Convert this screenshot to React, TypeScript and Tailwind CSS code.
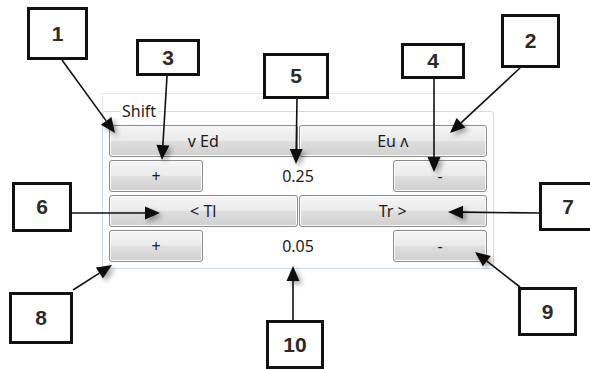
import React from "react";

type Box = { n: string; l: number; t: number; w: number; h: number };

const boxes: Box[] = [
  { n: "1", l: 27, t: 7, w: 61, h: 53 },
  { n: "3", l: 136, t: 39, w: 64, h: 37 },
  { n: "5", l: 263, t: 53, w: 66, h: 46 },
  { n: "4", l: 401, t: 43, w: 64, h: 36 },
  { n: "2", l: 501, t: 14, w: 59, h: 54 },
  { n: "6", l: 12, t: 182, w: 60, h: 50 },
  { n: "7", l: 539, t: 182, w: 58, h: 49 },
  { n: "8", l: 9, t: 292, w: 64, h: 52 },
  { n: "9", l: 518, t: 287, w: 59, h: 49 },
  { n: "10", l: 266, t: 320, w: 58, h: 49 },
];

const arrows: [number, number, number, number][] = [
  [62, 60, 115, 133],
  [167, 76, 162, 160],
  [297, 99, 296, 164],
  [434, 79, 434, 172],
  [520, 68, 450, 133],
  [72, 213, 160, 213],
  [539, 213, 448, 212],
  [73, 290, 112, 265],
  [520, 287, 475, 252],
  [293, 320, 293, 266],
];

function Arrow({ a }: { a: [number, number, number, number] }) {
  const [x1, y1, x2, y2] = a;
  const dx = x2 - x1;
  const dy = y2 - y1;
  const L = Math.hypot(dx, dy);
  const ux = dx / L;
  const uy = dy / L;
  const bx = x2 - ux * 15;
  const by = y2 - uy * 15;
  const px = -uy * 6.5;
  const py = ux * 6.5;
  return (
    <g>
      <line x1={x1} y1={y1} x2={bx} y2={by} stroke="#111" strokeWidth={1.6} />
      <polygon
        points={`${x2},${y2} ${bx + px},${by + py} ${bx - px},${by - py}`}
        fill="#111"
        filter="url(#sh)"
      />
    </g>
  );
}

function Btn({ children }: { children: React.ReactNode }) {
  return (
    <div className="flex h-[32px] items-center justify-center rounded-[3px] border border-[#8b8b8b] bg-[linear-gradient(to_bottom,#f5f5f5,#ebebeb_48%,#dedede_52%,#d0d0d0)] text-[16px] leading-none text-[#1c1c1c] shadow-[inset_0_0_0_1px_#fbfbfb]">
      {children}
    </div>
  );
}

export default function App() {
  return (
    <div className="relative h-[369px] w-[590px] overflow-hidden bg-white font-['Noto_Sans',sans-serif]">
      <div className="ml-[102px] mt-[93px] w-[392px] border-l border-t border-[#e3e8ee] pt-[9px]">
        <fieldset className="-ml-px rounded-[3px] border border-[#d2dce4] px-[6px] pb-[6px] pt-[6px]">
          <legend className="ml-[11px] px-[2px] text-[16px] leading-[16px] text-[#1c1c1c]">
            Shift
          </legend>
          <div className="grid gap-[3px]">
            <div className="grid grid-cols-2 gap-px">
              <Btn>v Ed</Btn>
              <Btn>Eu ʌ</Btn>
            </div>
            <div className="grid grid-cols-[94px_1fr_94px]">
              <Btn>+</Btn>
              <div className="flex items-center justify-center bg-white text-[16px] text-[#1c1c1c]">
                0.25
              </div>
              <Btn>-</Btn>
            </div>
            <div className="grid grid-cols-2 gap-px">
              <Btn>&lt; Tl</Btn>
              <Btn>Tr &gt;</Btn>
            </div>
            <div className="grid grid-cols-[94px_1fr_94px]">
              <Btn>+</Btn>
              <div className="flex items-center justify-center bg-white text-[16px] text-[#1c1c1c]">
                0.05
              </div>
              <Btn>-</Btn>
            </div>
          </div>
        </fieldset>
      </div>

      <svg
        className="pointer-events-none absolute left-0 top-0"
        width={590}
        height={369}
      >
        <defs>
          <filter id="sh" x="-100%" y="-100%" width="300%" height="300%">
            <feDropShadow dx="3" dy="3" stdDeviation="2.5" floodColor="#000" floodOpacity="0.35" />
          </filter>
        </defs>
        {arrows.map((a, i) => (
          <Arrow key={i} a={a} />
        ))}
      </svg>

      {boxes.map((b) => (
        <div
          key={b.n}
          className="absolute flex items-center justify-center border-[3px] border-[#111] bg-white font-['Liberation_Sans',Arial,sans-serif] text-[21px] font-bold text-[#2a2a2a]"
          style={{ left: b.l, top: b.t, width: b.w, height: b.h }}
        >
          {b.n}
        </div>
      ))}
    </div>
  );
}
